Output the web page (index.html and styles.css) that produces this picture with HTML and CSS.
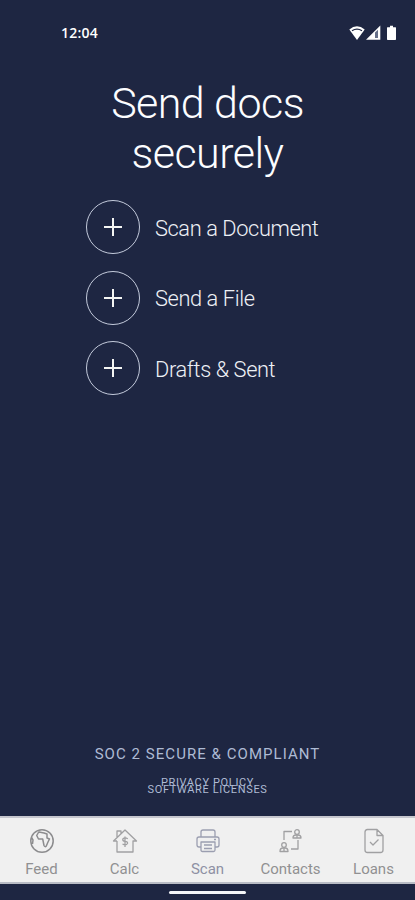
FILE: index.html
```html
<!DOCTYPE html>
<html lang="en">
<head>
<meta charset="utf-8">
<title>Send docs securely</title>
<link rel="stylesheet" href="styles.css">
</head>
<body>
<div class="phone">
  <header class="status">
    <span class="clock">12:04</span>
    <svg class="signals" width="48" height="16" viewBox="0 0 48 16">
      <path d="M.3 4.6Q8 -2 15.700 4.600L8 15Z" fill="#fff"/>
      <path d="M3 5.700Q8 2.600 13 5.700" fill="none" stroke="#1e2642" stroke-width="1.300"/>
      <path d="M17 14.800L31.300 .5V14.800Z" fill="#fff"/>
      <path d="M26 7.500L29 4.800V13H26Z" fill="#66708a"/>
      <path d="M38.500 2.200H41V.7H44V2.200H46.500Q47 2.200 47 2.700V14.300Q47 15 46.300 15H38.700Q38 15 38 14.300V2.700Q38 2.200 38.500 2.200Z" fill="#fff"/>
    </svg>
  </header>
  <main>
    <h1>Send docs<br>securely</h1>
    <ul class="actions">
      <li><span class="ring"><svg width="18" height="18" viewBox="0 0 18 18"><path d="M9 0V18M0 9H18"/></svg></span><span class="label">Scan a Document</span></li>
      <li><span class="ring"><svg width="18" height="18" viewBox="0 0 18 18"><path d="M9 0V18M0 9H18"/></svg></span><span class="label">Send a File</span></li>
      <li><span class="ring"><svg width="18" height="18" viewBox="0 0 18 18"><path d="M9 0V18M0 9H18"/></svg></span><span class="label">Drafts &amp; Sent</span></li>
    </ul>
  </main>
  <footer>
    <p class="soc">SOC 2 SECURE &amp; COMPLIANT</p>
    <p class="legal">PRIVACY POLICY</p>
    <p class="legal">SOFTWARE LICENSES</p>
  </footer>
  <nav>
    <a class="tab feed">
      <svg width="26" height="26" viewBox="0 0 26 26"><circle cx="13" cy="13" r="11.200"/><path d="M10 3.500L7.700 7.500L9.500 11H13.700L15 17.500Q16 19.500 17.300 18L19 14L20.500 11L18 10V6L15 5L10 4M2.500 9.500L4 12L3.500 16"/></svg>
      <span>Feed</span>
    </a>
    <a class="tab">
      <svg width="26" height="26" viewBox="0 0 26 26"><path d="M5 9V3H9V5.500M5 13H1.500L13 2L24.500 13H21V24H5V13M15.800 10.800Q13 9 11 10.800Q10 13 13 13.300Q16 13.500 15.500 15.500Q14 18 10.500 16M13 8.500V19"/></svg>
      <span>Calc</span>
    </a>
    <a class="tab scan">
      <svg width="26" height="26" viewBox="0 0 26 26"><path d="M6 9V4Q6 2 8 2H18Q20 2 20 4V9M6 19H4Q2 19 2 17V11Q2 9 4 9H22Q24 9 24 11V17Q24 19 22 19H20M6 14H20V22Q20 23.500 18.500 23.500H7.500Q6 23.500 6 22ZM9 17H17M9 20.500H17M19 11.500H21"/></svg>
      <span>Scan</span>
    </a>
    <a class="tab contacts">
      <svg width="26" height="26" viewBox="0 0 26 26"><path d="M6 12V3.500H14M20 12V21H13"/><circle cx="19" cy="4" r="2.300"/><path d="M15 10Q15 7 18 7H20Q23 7 23 10ZM19 7V10"/><circle cx="6" cy="17" r="2.300"/><path d="M2 23.500Q2 20 5 20H7Q10 20 10 23.500ZM6 20V23"/></svg>
      <span>Contacts</span>
    </a>
    <a class="tab">
      <svg width="26" height="26" viewBox="0 0 26 26"><path d="M6.500 1.500H16L22 7.500V22Q22 24.500 19.500 24.500H6.500Q4 24.500 4 22V4Q4 1.500 6.500 1.500ZM16 2V7.500H22M9 14L12 17L17.500 11.500"/></svg>
      <span>Loans</span>
    </a>
  </nav>
  <div class="gesture"><span class="pill"></span></div>
</div>
</body>
</html>
```
FILE: styles.css
```css
* { box-sizing: border-box; margin: 0; padding: 0; }
body { background: #1e2642; font-family: Roboto, sans-serif; }
.phone {
  width: 415px;
  height: 900px;
  display: flex;
  flex-direction: column;
  background: #1e2642;
}
.status {
  height: 78px;
  padding: 25px 18px 0 61px;
  display: flex;
  justify-content: space-between;
  align-items: flex-start;
  color: #fff;
}
.clock { font: 600 14px/16px "Open Sans", sans-serif; letter-spacing: .2px; }
main { flex: 1; }
h1 {
  color: #fcfdff;
  font-size: 43px;
  font-weight: 300;
  line-height: 50px;
  letter-spacing: -.55px;
  text-align: center;
}
.actions { list-style: none; padding: 22px 0 0 86px; }
.actions li {
  height: 54px;
  margin-bottom: 16.7px;
  display: flex;
  align-items: center;
  gap: 15px;
  color: #eef1f6;
  font-size: 21.8px;
  font-weight: 300;
  line-height: 26px;
  letter-spacing: -.4px;
}
.label { padding-top: 3px; }
.ring {
  width: 54px;
  height: 54px;
  border: 1.5px solid #c4cbdc;
  border-radius: 50%;
  display: flex;
  align-items: center;
  justify-content: center;
}
.ring svg { stroke: #f4f5f3; stroke-width: 2; }
footer { height: 71px; text-align: center; color: #aebbd4; }
.soc { font-size: 15px; line-height: 18px; letter-spacing: 1.05px; margin-bottom: 16px; }
.legal { font-size: 11px; line-height: 7px; letter-spacing: .65px; }
nav {
  height: 68px;
  display: grid;
  grid-template-columns: repeat(5, 1fr);
  background: #f0f0f0;
  border-top: 2px solid #c5c6cd;
  border-bottom: 2px solid #b9bcc5;
}
.tab {
  display: flex;
  flex-direction: column;
  align-items: center;
  padding-top: 10px;
  gap: 6px;
  color: #909092;
  font-size: 15px;
  line-height: 18px;
}
.tab svg { fill: none; stroke: #a0a0a2; stroke-width: 1.3; stroke-linejoin: round; }
.tab.feed svg { stroke: #8c8c8e; stroke-width: 1.5; }
.tab.scan { color: #8e91a4; }
.tab.scan svg { stroke: #9b9eb0; }
.gesture { height: 16px; display: flex; justify-content: center; padding-top: 7px; }
.pill { width: 77px; height: 3px; border-radius: 2px; background: #f4f5f8; }
```
